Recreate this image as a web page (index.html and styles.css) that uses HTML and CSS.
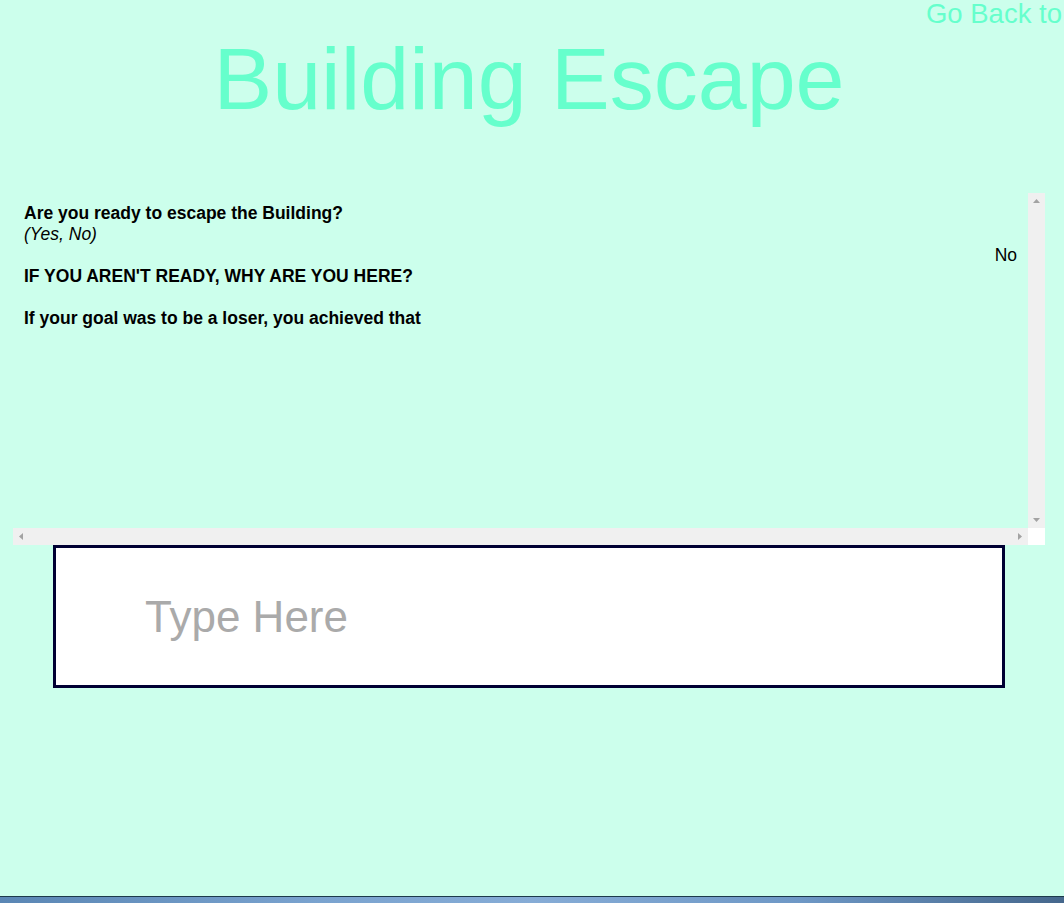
FILE: index.html
```html
<!DOCTYPE html>
<html lang="en">
<head>
<meta charset="utf-8">
<title>Building Escape</title>
<link rel="stylesheet" href="styles.css">
</head>
<body>
<div class="page">
  <header class="header">
    <div class="nav"><a class="back" href="#">Go Back to</a></div>
    <h1 class="title">Building Escape</h1>
  </header>

  <section class="console">
    <div class="console-body">
      <div class="line bold">Are you ready to escape the Building?</div>
      <div class="line italic">(Yes, No)</div>
      <div class="line answer">No</div>
      <div class="line bold">IF YOU AREN'T READY, WHY ARE YOU HERE?</div>
      <div class="line blank"></div>
      <div class="line bold">If your goal was to be a loser, you achieved that</div>
    </div>
    <div class="vbar">
      <svg class="arrow" width="7" height="4" viewBox="0 0 7 4"><path d="M3.5 0 L7 4 L0 4 Z" fill="#a3a3a3"/></svg>
      <svg class="arrow" width="7" height="4" viewBox="0 0 7 4"><path d="M0 0 L7 0 L3.5 4 Z" fill="#a3a3a3"/></svg>
    </div>
    <div class="hbar">
      <svg class="arrow" width="4" height="7" viewBox="0 0 4 7"><path d="M4 0 L4 7 L0 3.5 Z" fill="#a3a3a3"/></svg>
      <svg class="arrow" width="4" height="7" viewBox="0 0 4 7"><path d="M0 0 L4 3.5 L0 7 Z" fill="#a3a3a3"/></svg>
    </div>
    <div class="corner"></div>
  </section>

  <div class="entry">
    <input class="command" type="text" placeholder="Type Here">
  </div>
</div>
<div class="taskbar"></div>
</body>
</html>
```

FILE: styles.css
```css
html, body {
  margin: 0;
  padding: 0;
}

body {
  width: 1064px;
  height: 903px;
  display: flex;
  flex-direction: column;
  background: #ccffec;
  font-family: "Liberation Sans", Arial, sans-serif;
  overflow: hidden;
}

.page {
  flex: 1;
  display: flex;
  flex-direction: column;
}

.header {
  display: flex;
  flex-direction: column;
}

.nav {
  display: flex;
  justify-content: flex-end;
  padding-right: 2px;
  height: 28px;
}

.back {
  color: #66ffcc;
  text-decoration: none;
  font-size: 27.5px;
  line-height: 27px;
}

.title {
  margin: 7px 6px 0 0;
  font-weight: normal;
  font-size: 88px;
  line-height: 88px;
  color: #66ffcc;
  text-align: center;
}

.console {
  margin: 70px 0 0 13px;
  width: 1032px;
  height: 352px;
  display: grid;
  grid-template-columns: 1fr 17px;
  grid-template-rows: 1fr 17px;
}

.console-body {
  padding: 10px 11px 0 11px;
  font-size: 17.5px;
  color: #000;
}

.line {
  line-height: 21px;
  height: 21px;
  white-space: nowrap;
}

.bold {
  font-weight: bold;
}

.italic {
  font-style: italic;
}

.answer {
  text-align: right;
}

.vbar {
  background: #f0f0f0;
  display: flex;
  flex-direction: column;
  justify-content: space-between;
  align-items: center;
  padding: 6px 0 6px;
}

.hbar {
  background: #f0f0f0;
  display: flex;
  justify-content: space-between;
  align-items: center;
  padding: 0 6px;
}

.corner {
  background: #ffffff;
}

.arrow {
  display: block;
}

.entry {
  padding-left: 53px;
}

.command {
  box-sizing: border-box;
  width: 952px;
  height: 143px;
  margin: 0;
  border: 3px solid #000033;
  background: #ffffff;
  padding: 0 0 0 89px;
  font-family: "Liberation Sans", Arial, sans-serif;
  font-size: 44px;
  color: #333;
  outline: none;
}

.command::placeholder {
  color: #aaaaaa;
  opacity: 1;
}

.taskbar {
  height: 7px;
  border-top: 1px solid #1c3a4a;
  background: linear-gradient(90deg, #5a86b4 0%, #7aa3cf 30%, #86acd6 50%, #6e98c6 75%, #45678c 100%);
  box-sizing: border-box;
  flex: none;
}
```
